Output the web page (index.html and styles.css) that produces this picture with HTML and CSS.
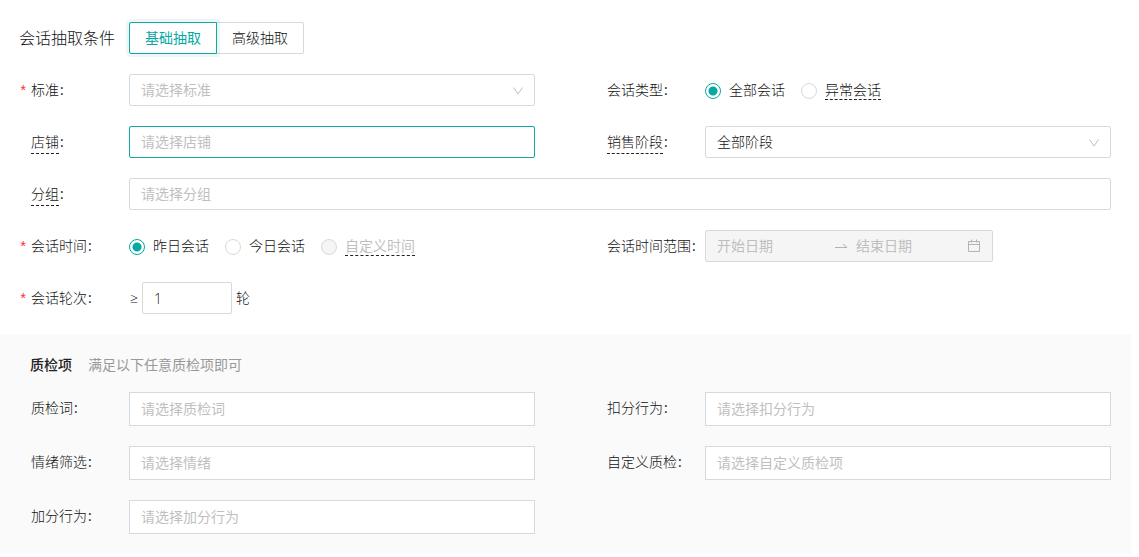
FILE: index.html
```html
<!DOCTYPE html>
<html lang="zh-CN">
<head>
<meta charset="utf-8">
<meta name="viewport" content="width=device-width, initial-scale=1">
<title>会话抽取条件</title>
<link rel="stylesheet" href="styles.css">
</head>
<body>
<form class="page">
  <header class="header">
    <h1 class="title">会话抽取条件</h1>
    <div class="tabs">
      <button type="button" class="tab tab-active">基础抽取</button>
      <button type="button" class="tab">高级抽取</button>
    </div>
  </header>

  <section class="fields">
    <div class="field">
      <label class="label required" for="standard">标准</label>
      <div class="select-box">
        <select id="standard" class="control select" required>
          <option value="" selected>请选择标准</option>
        </select>
        <svg class="arrow" viewBox="0 0 12 12" aria-hidden="true"><path d="M1.5 2.5 6 9 10.5 2.5"/></svg>
      </div>
    </div>
    <div class="field">
      <span class="label" id="type-label">会话类型</span>
      <div class="radios" role="radiogroup" aria-labelledby="type-label">
        <label class="choice"><input class="radio" type="radio" name="type" checked><span>全部会话</span></label>
        <label class="choice"><input class="radio" type="radio" name="type"><span class="choice-hint">异常会话</span></label>
      </div>
    </div>
    <div class="field">
      <label class="label" for="shop"><span class="hint">店铺</span></label>
      <input id="shop" class="control control-active" type="text" placeholder="请选择店铺">
    </div>
    <div class="field">
      <label class="label" for="stage"><span class="hint">销售阶段</span></label>
      <div class="select-box">
        <select id="stage" class="control select">
          <option selected>全部阶段</option>
        </select>
        <svg class="arrow" viewBox="0 0 12 12" aria-hidden="true"><path d="M1.5 2.5 6 9 10.5 2.5"/></svg>
      </div>
    </div>
    <div class="field field-wide">
      <label class="label" for="group"><span class="hint">分组</span></label>
      <input id="group" class="control" type="text" placeholder="请选择分组">
    </div>
    <div class="field">
      <span class="label required" id="time-label">会话时间</span>
      <div class="radios" role="radiogroup" aria-labelledby="time-label">
        <label class="choice"><input class="radio" type="radio" name="time" checked><span>昨日会话</span></label>
        <label class="choice"><input class="radio" type="radio" name="time"><span>今日会话</span></label>
        <label class="choice"><input class="radio" type="radio" name="time" disabled><span class="choice-hint"><span class="muted">自定义时间</span></span></label>
      </div>
    </div>
    <div class="field">
      <label class="label" for="start">会话时间范围</label>
      <div class="range">
        <input id="start" class="date" type="text" placeholder="开始日期" disabled>
        <svg class="range-arrow" viewBox="0 0 14 14" aria-hidden="true"><path d="M1 8.5H13L9 5"/></svg>
        <input class="date" type="text" placeholder="结束日期" aria-label="结束日期" disabled>
        <svg class="calendar" viewBox="0 0 14 14" aria-hidden="true"><path d="M1.5 2.5h11v10h-11zM1.5 5.5h11M4.5 .5v3M9.5 .5v3"/></svg>
      </div>
    </div>
    <div class="field field-wide">
      <label class="label required" for="rounds">会话轮次</label>
      <div class="rounds">
        <span>≥</span>
        <input id="rounds" class="control number" type="text" inputmode="numeric" value="1">
        <span>轮</span>
      </div>
    </div>
  </section>

  <section class="panel">
    <header class="panel-head">
      <h2 class="panel-title">质检项</h2>
      <p class="panel-note">满足以下任意质检项即可</p>
    </header>
    <div class="panel-fields">
      <div class="field">
        <label class="label" for="word">质检词</label>
        <input id="word" class="control control-tall" type="text" placeholder="请选择质检词">
      </div>
      <div class="field">
        <label class="label" for="deduct">扣分行为</label>
        <input id="deduct" class="control control-tall" type="text" placeholder="请选择扣分行为">
      </div>
      <div class="field">
        <label class="label" for="mood">情绪筛选</label>
        <input id="mood" class="control control-tall" type="text" placeholder="请选择情绪">
      </div>
      <div class="field">
        <label class="label" for="custom">自定义质检</label>
        <input id="custom" class="control control-tall" type="text" placeholder="请选择自定义质检项">
      </div>
      <div class="field">
        <label class="label" for="bonus">加分行为</label>
        <input id="bonus" class="control control-tall" type="text" placeholder="请选择加分行为">
      </div>
    </div>
  </section>
</form>
</body>
</html>
```

FILE: styles.css
```css
* {
  box-sizing: border-box;
}

body {
  margin: 0;
  background: #fff;
  color: #111;
  font: 300 14px/22px "Open Sans", "Noto Sans CJK SC", sans-serif;
}

input,
select,
button {
  margin: 0;
  color: inherit;
  font: inherit;
}

.page {
  margin-right: 8px;
  padding-top: 22px;
}

.header {
  display: flex;
  align-items: center;
  gap: 12px;
  padding: 0 19px;
}

.title {
  margin: 0;
  min-width: 98px;
  font-size: 16px;
  font-weight: 300;
  line-height: 32px;
}

.tabs {
  display: flex;
}

.tab {
  width: 88px;
  height: 32px;
  padding: 0;
  border: 1px solid #d9d9d9;
  border-radius: 0 2px 2px 0;
  background: #fff;
}

.tab + .tab {
  margin-left: -1px;
}

.tab-active {
  z-index: 1;
  position: relative;
  border-color: #13a8a0;
  border-radius: 2px 0 0 2px;
  color: #08a8a2;
  font-weight: 400;
  box-shadow: 0 0 0 3px rgba(8, 168, 162, 0.08);
}

.fields,
.panel-fields {
  display: grid;
  grid-template-columns: 1fr 1fr;
  gap: 20px 72px;
}

.fields {
  padding: 20px 20px 20px 31px;
}

.field {
  display: flex;
  align-items: flex-start;
  min-width: 0;
}

.field-wide {
  grid-column: 1 / -1;
}

.label {
  display: flex;
  flex: none;
  align-items: center;
  width: 98px;
  height: 32px;
  white-space: nowrap;
}

.label::after {
  content: ":";
  margin-left: 1px;
  font-weight: 400;
}

.required::before {
  content: "*";
  width: 12px;
  margin-left: -12px;
  padding-top: 4px;
  color: #ff2b30;
  font-family: "Liberation Mono", monospace;
}

.hint {
  border-bottom: 1px dashed #222;
}

.control {
  flex: 1;
  width: 100%;
  min-width: 0;
  height: 32px;
  padding: 0 11px 2px;
  border: 1px solid #d9d9d9;
  border-radius: 2px;
  outline: 0;
  background: #fff;
}

.control::placeholder,
.date::placeholder {
  color: #bfbfbf;
  font-weight: 400;
  opacity: 1;
}

.control-active {
  border-color: #13a8a0;
}

.control-tall {
  height: 34px;
  border-radius: 0;
}

.select-box {
  position: relative;
  flex: 1;
  display: flex;
}

.select {
  appearance: none;
  padding-bottom: 0;
}

.select:invalid {
  color: #bfbfbf;
  font-weight: 400;
}

.arrow {
  position: absolute;
  top: 11px;
  right: 11px;
  width: 12px;
  height: 12px;
  fill: none;
  stroke: #bfbfbf;
  pointer-events: none;
}

.radios {
  display: flex;
  gap: 16px;
  height: 32px;
}

.choice {
  display: flex;
  align-items: center;
  gap: 8px;
  line-height: 18px;
  white-space: nowrap;
}

.choice-hint {
  border-bottom: 1px dashed #222;
}

.muted {
  color: #bfbfbf;
  font-weight: 400;
}

.radio {
  appearance: none;
  width: 16px;
  height: 16px;
  margin-top: 2px;
  border: 1px solid #d9d9d9;
  border-radius: 50%;
  background: #fff;
}

.radio:checked {
  border-color: #08a8a2;
  background: radial-gradient(circle, #08a8a2 4px, #fff 5px);
}

.radio:disabled {
  background: #f5f5f5;
}

.range {
  display: flex;
  align-items: center;
  width: 288px;
  height: 32px;
  padding: 0 11px;
  border: 1px solid #d9d9d9;
  border-radius: 2px;
  background: #f5f5f5;
}

.date {
  flex: 1;
  min-width: 0;
  padding: 0;
  border: 0;
  background: transparent;
}

.range-arrow,
.calendar {
  flex: none;
  width: 14px;
  height: 14px;
  fill: none;
  stroke: #b3b3b3;
}

.range-arrow {
  margin: 0 8px 0 6px;
}

.rounds {
  display: flex;
  align-items: center;
  gap: 4px;
  padding-left: 1px;
}

.number {
  flex: none;
  width: 90px;
  padding-bottom: 0;
}

.panel {
  padding: 20px 20px 20px 31px;
  background: #fafafa;
}

.panel-head {
  display: flex;
  gap: 16px;
  margin: 0 0 16px -1px;
}

.panel-title,
.panel-note {
  margin: 0;
  font-size: 14px;
}

.panel-title {
  color: #222;
  font-weight: 500;
}

.panel-note {
  color: #999;
  font-weight: 400;
}
```
